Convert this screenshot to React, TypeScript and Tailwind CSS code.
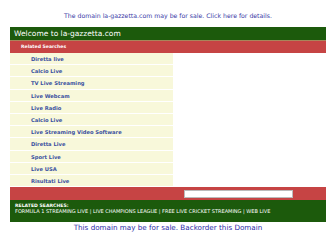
import React from "react";

const items = [
  "Diretta live",
  "Calcio Live",
  "TV Live Streaming",
  "Live Webcam",
  "Live Radio",
  "Calcio Live",
  "Live Streaming Video Software",
  "Diretta Live",
  "Sport Live",
  "Live USA",
  "Risultati Live",
];

const App = () => {
  return (
    <div className="w-[336px] h-[252px] bg-white font-['DejaVu_Sans',sans-serif] overflow-hidden">
      {/* top notice */}
      <div className="pt-[12px] h-[27px] text-center text-[6.2px] leading-[8px] text-[#3a3aa6]">
        The domain la-gazzetta.com may be for sale. Click here for details.
      </div>

      <div className="mx-[10px] w-[316px]">
        <div className="h-[13px] bg-[#1c5a0c] text-white text-[7.5px] leading-[13px] pl-[4px]">
          Welcome to la-gazzetta.com
        </div>
        <div className="h-[13px] bg-[#c64444] border-t border-[#a8865a] text-white font-bold text-[4.6px] leading-[12px] pl-[11px]">
          Related Searches
        </div>

        <div className="flex">
          <ul className="w-[163px] bg-[#f8f8da]">
            {items.map((item, i) => (
              <li
                key={i}
                className="h-[12.2px] border-b border-[#ffffff] text-[5.2px] leading-[12px] font-bold text-[#3a50a0] pl-[21px]"
              >
                {item}
              </li>
            ))}
          </ul>
          <div className="flex-1"></div>
        </div>

        <div className="h-[13px] bg-[#c64444] flex items-center">
          <div className="ml-[174px] w-[109px] h-[8px] bg-white border border-[#bbbbbb]"></div>
        </div>
        <div className="h-[22px] bg-[#1c5a0c] text-white pl-[5px] pt-[3px]">
          <div className="font-bold text-[4.6px] leading-[5px]">RELATED SEARCHES:</div>
          <div className="text-[5px] leading-[6px]">
            FORMULA 1 STREAMING LIVE | LIVE CHAMPIONS LEAGUE | FREE LIVE CRICKET STREAMING | WEB LIVE
          </div>
        </div>
      </div>

      <div className="pt-[1px] text-center text-[7.2px] leading-[10px] text-[#2a2aa6]">
        This domain may be for sale. Backorder this Domain
      </div>
    </div>
  );
};

export default App;
